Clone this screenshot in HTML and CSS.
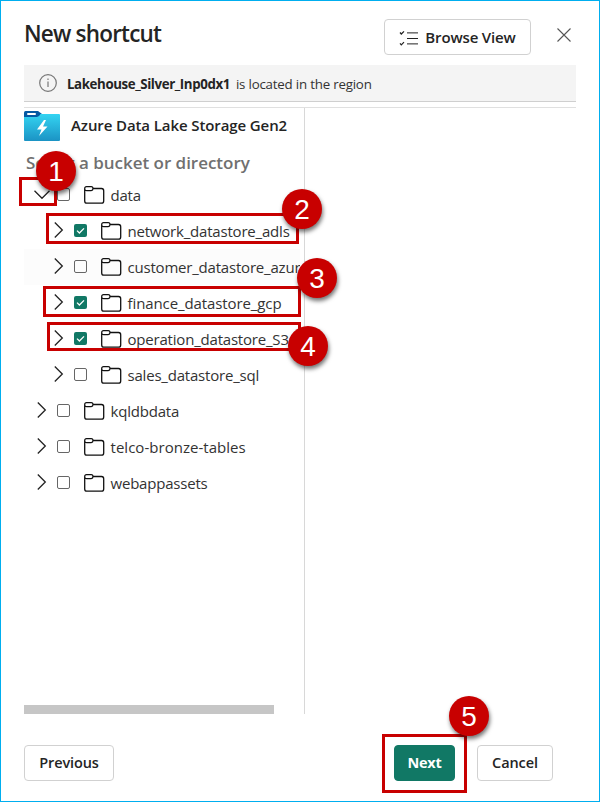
FILE: index.html
```html
<!DOCTYPE html>
<html lang="en">
<head>
<meta charset="utf-8">
<title>New shortcut</title>
<link rel="stylesheet" href="styles.css">
</head>
<body>
<svg class="defs" width="0" height="0">
  <symbol id="chevron" viewBox="0 0 10 18"><path d="M.8 1.500 8.300 9 .8 16.500" fill="none" stroke="#222" stroke-width="1.300"/></symbol>
  <symbol id="folder" viewBox="0 0 21 18"><path d="M.7 3V15q0 2.200 2.200 2.200h14.600q2.200 0 2.200-2.200V4.700q0-2.200-2.200-2.200H9M2.700.7h4.500q1.800 0 1.800 1.900T7.200 4.600H2.700Q.7 4.600.7 2.600T2.700.7Z" fill="none" stroke="#111" stroke-width="1.300"/></symbol>
  <symbol id="check" viewBox="0 0 13 13"><path d="M3 6.600 5.400 9 10 4.400" fill="none" stroke="#fff" stroke-width="1.300"/></symbol>
</svg>
<main class="dialog">
  <header class="header">
    <h1>New shortcut</h1>
    <button class="btn browse">
      <svg width="19" height="16" viewBox="0 0 19 16" fill="none" stroke="#222"><path d="M1 2.500 2.300 4 5 1.300M1 13.300l1.300 1.500L5 12.100" stroke-width="1.200"/><path d="M8 2.500h11M8 13.500h11" stroke="#777"/><path d="M8 3.500h11M8 14.500h11" stroke="#aaa"/><path d="M8 8.500h11" stroke-width="1"/></svg>
      <span>Browse View</span>
    </button>
    <svg class="close" width="14" height="14" viewBox="0 0 14 14"><path d="m.5.5 13 13m0-13-13 13" stroke="#555" stroke-width="1.100"/></svg>
  </header>
  <div class="notice">
    <svg width="18" height="18" viewBox="0 0 18 18" fill="none" stroke="#777"><circle cx="9" cy="9" r="8.300" stroke-width="1.200"/><path d="M9 7.500V13M9 4.500V6" stroke-width="1.200"/></svg>
    <b>Lakehouse_Silver_Inp0dx1</b><span>is located in the region</span>
  </div>
  <div class="body">
    <section class="tree-pane">
      <div class="source">
        <svg width="36" height="31" viewBox="0 0 36 31"><defs><linearGradient id="g" x2="0" y2="1"><stop stop-color="#34d4f2"/><stop offset="1" stop-color="#1b93c4"/></linearGradient></defs><path d="M0 1.500Q0 0 1.500 0H14l4 3-4 4H0Z" fill="#0559a3"/><rect x="3" y="2" width="9" height="2" rx="1" fill="#fff"/><path d="M0 6h13q2 0 3.500-3H35q1 0 1 1v25q0 1-1 1H1q-1 0-1-1Z" fill="url(#g)"/><path d="M20 9 13 18.500h4.500L15 25l8.500-9.500h-4.500L22 9Z" fill="#fff"/></svg>
        <span>Azure Data Lake Storage Gen2</span>
      </div>
      <h2>Select a bucket or directory</h2>
      <ul class="tree">
        <li class="row"><svg class="chev open"><use href="#chevron"/></svg><i class="box"></i><svg class="folder"><use href="#folder"/></svg><span>data</span></li>
        <li class="row sub"><svg class="chev"><use href="#chevron"/></svg><i class="box on"><svg width="13" height="13"><use href="#check"/></svg></i><svg class="folder"><use href="#folder"/></svg><span>network_datastore_adls</span></li>
        <li class="row sub tint"><svg class="chev"><use href="#chevron"/></svg><i class="box"></i><svg class="folder"><use href="#folder"/></svg><span>customer_datastore_azur</span></li>
        <li class="row sub"><svg class="chev"><use href="#chevron"/></svg><i class="box on"><svg width="13" height="13"><use href="#check"/></svg></i><svg class="folder"><use href="#folder"/></svg><span class="loose">finance_datastore_gcp</span></li>
        <li class="row sub"><svg class="chev"><use href="#chevron"/></svg><i class="box on"><svg width="13" height="13"><use href="#check"/></svg></i><svg class="folder"><use href="#folder"/></svg><span>operation_datastore_S3</span></li>
        <li class="row sub"><svg class="chev"><use href="#chevron"/></svg><i class="box"></i><svg class="folder"><use href="#folder"/></svg><span>sales_datastore_sql</span></li>
        <li class="row"><svg class="chev"><use href="#chevron"/></svg><i class="box"></i><svg class="folder"><use href="#folder"/></svg><span>kqldbdata</span></li>
        <li class="row"><svg class="chev"><use href="#chevron"/></svg><i class="box"></i><svg class="folder"><use href="#folder"/></svg><span class="wide">telco-bronze-tables</span></li>
        <li class="row"><svg class="chev"><use href="#chevron"/></svg><i class="box"></i><svg class="folder"><use href="#folder"/></svg><span>webappassets</span></li>
      </ul>
      <div class="scrollbar"></div>
    </section>
    <section class="preview"></section>
  </div>
  <footer class="footer">
    <button class="btn prev">Previous</button>
    <button class="btn next">Next</button>
    <button class="btn cancel">Cancel</button>
  </footer>
  <div class="mark m1"></div><div class="mark m2"></div><div class="mark m3"></div><div class="mark m4"></div><div class="mark m5"></div>
  <div class="num n1">1</div><div class="num n2">2</div><div class="num n3">3</div><div class="num n4">4</div><div class="num n5">5</div>
</main>
</body>
</html>
```
FILE: styles.css
```css
* { box-sizing: border-box; }
body { margin: 0; background: #fff; font-family: "Open Sans", "Noto Sans", sans-serif; color: #242424; }
.defs { position: absolute; }
.dialog { position: relative; width: 600px; height: 802px; border: 1px solid #00aeef; padding: 0 23px; display: flex; flex-direction: column; overflow: hidden; }
.header { height: 64px; display: flex; align-items: flex-start; flex: none; }
h1 { margin: 17px auto 0 0; font-size: 22.5px; line-height: 32px; font-weight: 600; letter-spacing: -.8px; white-space: nowrap; }
.btn { height: 36px; border: 1px solid #d1d1d1; border-radius: 4px; background: #fff; color: #242424; font: 600 14.5px/20px "Open Sans", sans-serif; letter-spacing: -.1px; padding: 0; display: flex; align-items: center; justify-content: center; white-space: nowrap; }
.browse { width: 147px; margin-top: 18px; gap: 7px; font-size: 15px; letter-spacing: -.15px; }
.browse svg { margin-top: 1px; }
.browse span { padding-bottom: 1px; }
.close { margin: 27px 5px 0 26px; }
.notice { height: 37px; flex: none; background: #f4f4f4; border-bottom: 1px solid #cfcfcf; display: flex; align-items: center; padding: 1px 0 0 15px; font-size: 13.3px; white-space: nowrap; }
.notice svg { margin-bottom: 1px; }
.notice b { margin: 0 6px 0 10px; font-weight: 700; letter-spacing: -.4px; }
.notice span { color: #333; letter-spacing: -.2px; }
.body { height: 607px; margin-top: 5px; flex: none; border-top: 1px solid #e0e0e0; display: flex; }
.tree-pane { width: 281px; border-right: 1px solid #d8d8d8; display: flex; flex-direction: column; }
.source { height: 36px; padding-top: 3px; display: flex; gap: 11px; font-size: 15px; line-height: 28px; font-weight: 600; letter-spacing: -.1px; white-space: nowrap; }
h2 { margin: 7px 0 0 2px; height: 26px; font-size: 17px; line-height: 23px; font-weight: 600; color: #707070; letter-spacing: -.03px; white-space: nowrap; }
.tree { list-style: none; margin: 0; padding: 0; }
.row { height: 36px; width: 276px; display: flex; align-items: center; padding-left: 13px; overflow: hidden; white-space: nowrap; font-size: 15px; color: #333; letter-spacing: -.2px; }
.sub { padding-left: 30px; }
.loose { letter-spacing: -.1px; }
.wide { letter-spacing: .03px; }
.tint { background: #fcfcfc; }
.chev { width: 10px; height: 18px; margin: 0 10px 2px 0; flex: none; }
.open { transform: rotate(90deg); margin-bottom: 0; }
.box { width: 13px; height: 13px; border: 1px solid #666; border-radius: 2px; flex: none; margin: 0 14px 2px 0; display: flex; }
.on { background: #117865; border: 0; }
.folder { width: 21px; height: 18px; flex: none; margin-right: 5.5px; }
.scrollbar { width: 250px; height: 9px; margin-top: auto; background: #c6c6c6; }
.footer { display: flex; margin-top: 31px; }
.prev { width: 90px; }
.next { width: 61px; margin-left: 280px; background: #117865; border-color: #117865; color: #fff; font-weight: 700; letter-spacing: -.3px; }
.cancel { width: 76px; margin-left: 22px; }
.mark { position: absolute; border: 3px solid #c80000; }
.m1 { left: 18px; top: 176px; width: 38px; height: 29px; }
.m2 { left: 45px; top: 212px; width: 253px; height: 31px; }
.m3 { left: 42px; top: 285px; width: 258px; height: 31px; }
.m4 { left: 46px; top: 321px; width: 254px; height: 29px; }
.m5 { left: 381px; top: 733px; width: 85px; height: 59px; }
.num { position: absolute; width: 40px; height: 40px; border-radius: 50%; background: #c80000; color: #fff; font: 28px/41px "Liberation Sans", sans-serif; text-align: center; box-shadow: 1px 3px 4px rgba(0,0,0,.55); }
.n1 { left: 35px; top: 150px; }
.n2 { left: 281px; top: 188px; }
.n3 { left: 296px; top: 257px; }
.n4 { left: 287px; top: 325px; }
.n5 { left: 448px; top: 695px; }
```
